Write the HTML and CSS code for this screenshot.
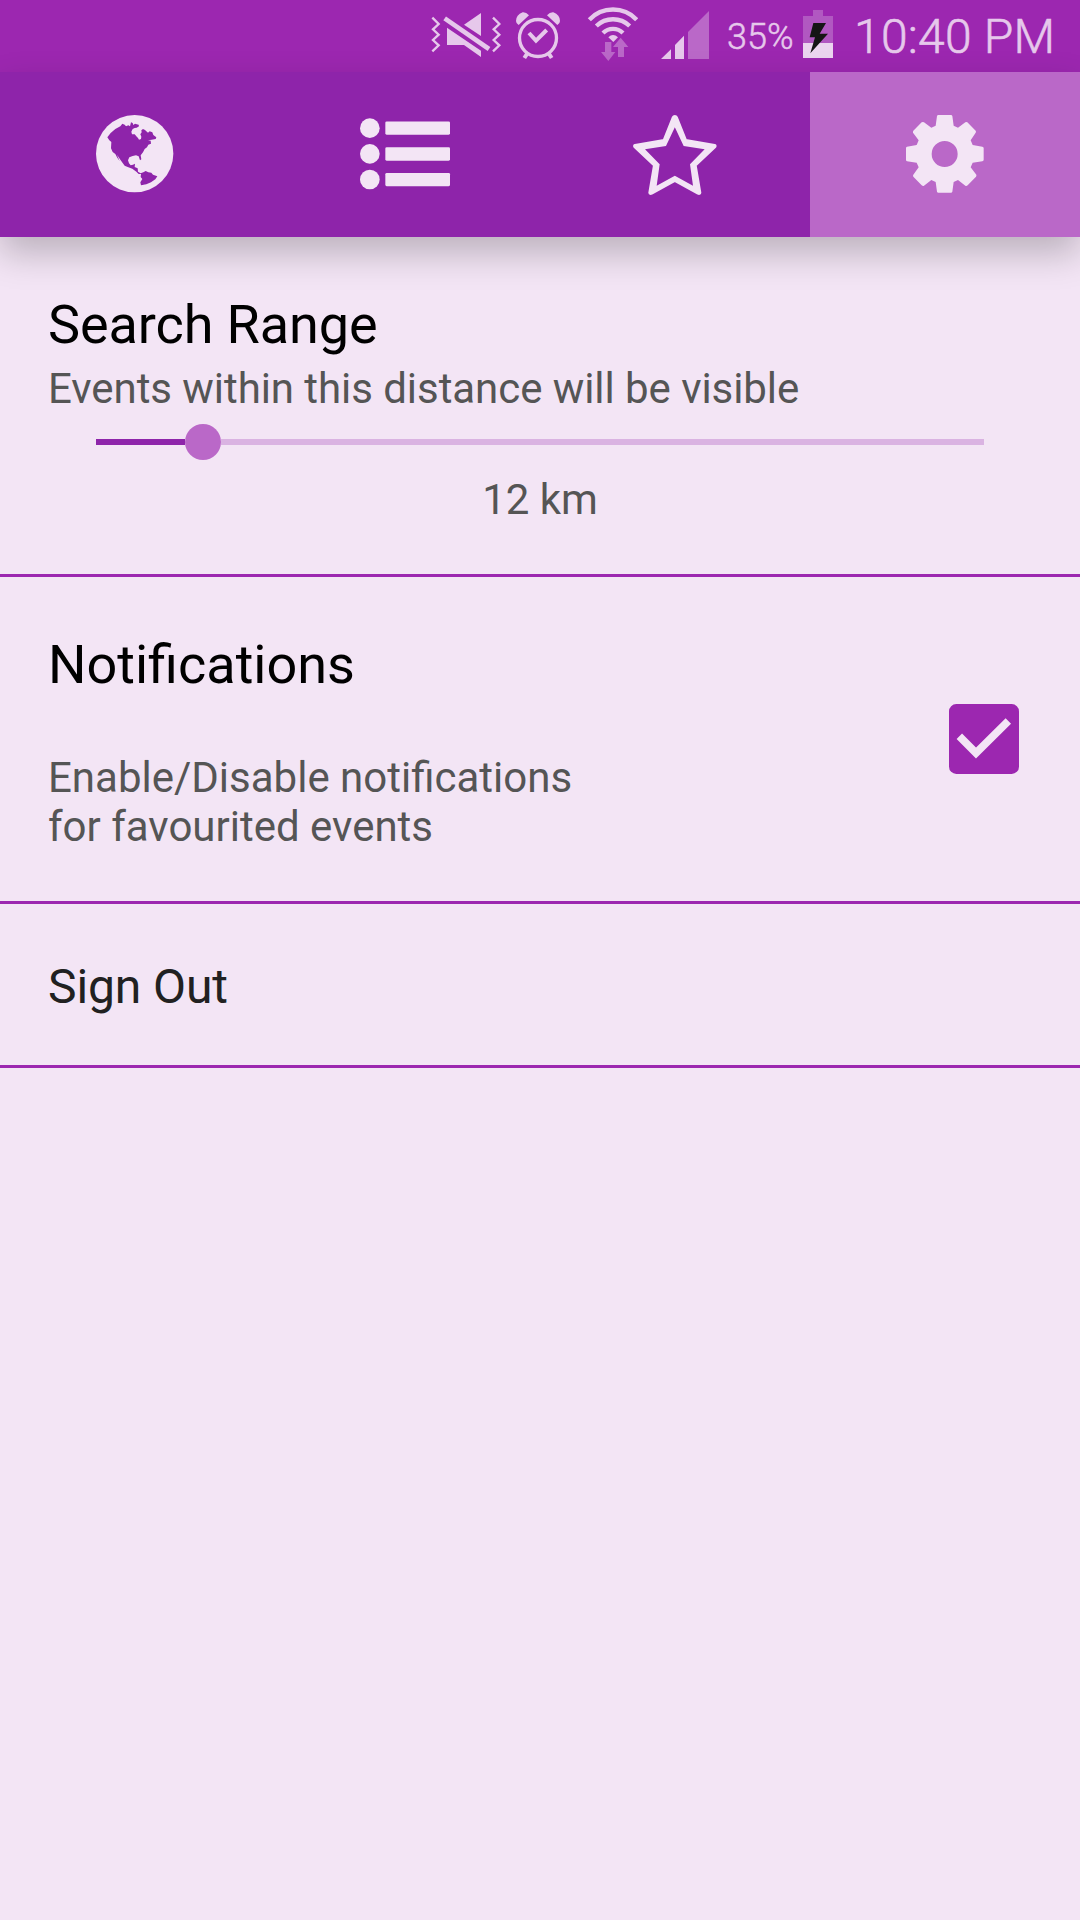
FILE: index.html
```html
<!DOCTYPE html>
<html lang="en">
<head>
<meta charset="utf-8">
<title>Settings</title>
<link rel="stylesheet" href="styles.css">
</head>
<body>
<header class="status">
  <svg class="s-mute" viewBox="30 0 216 216">
    <g fill="none" stroke="#e6c8eb" stroke-width="7"><path d="M37 53L56 72L39 88L56 104L39 120L56 136L37 154"/><path d="M219 53L238 72L221 88L238 104L221 120L238 136L219 154"/><path d="M74 55L207 147" stroke-width="14"/></g>
    <path fill="#e6c8eb" d="M183 39V108L132 74ZM81 83L183 152V171L132 135H81Z"/>
  </svg>
  <svg class="s-alarm" viewBox="282 0 144 216">
    <g fill="none" stroke="#e6c8eb"><circle cx="354" cy="114" r="55.500" stroke-width="10"/><path d="M327 99L348 122L380 90" stroke-width="12"/><path d="M322 160L313 174M386 160L395 174" stroke-width="12"/></g>
    <path fill="#e6c8eb" d="M296 75L327 46Q318 36 308 37Q288 45 288 63Q288 71 296 75ZM412 75L381 46Q390 36 400 37Q420 45 420 63Q420 71 412 75Z"/>
  </svg>
  <svg class="s-wifi" viewBox="501 0 153 216">
    <g fill="none" stroke="#e6c8eb" stroke-width="13"><path d="M508 59A98 98 0 0 1 650 59"/><path d="M529 78A72 72 0 0 1 629 78"/><path d="M549 99A43 43 0 0 1 609 99"/></g>
    <path fill="#e6c8eb" d="M565 112Q579 98 594 112L580 126Z"/>
    <path fill="#ba68c8" d="M555 126H574V156H586L565 183L543 156H555ZM602 113L625 141H612V171H594V141H579Z"/>
  </svg>
  <svg class="s-signal" viewBox="720 0 150 216">
    <path fill="#e6c8eb" d="M723 177L753 148V177ZM765 177V135L792 107V177Z"/><path fill="#ba68c8" d="M804 177V96L867 33V177Z"/>
  </svg>
  <span class="percent">35%</span>
  <svg class="s-battery" viewBox="309 0 90 216">
    <path fill="#b158c1" d="M339 30H369V48H399V129H309V48H339Z"/><path fill="#ebd4ef" d="M309 129H399V174H309Z"/><path fill="#151515" d="M340 69H378L359 101H384L331 160L345 112H329Z"/>
  </svg>
  <span class="clock">10:40 PM</span>
</header>
<nav class="tabs">
  <a class="tab"><svg class="icon" viewBox="0 0 330 330">
    <circle cx="164" cy="161" r="116" fill="#f3e5f5"/>
    <path fill="#8e24aa" d="M82 112L92 99L106 87L121 79L127 71L134 74L138 79L145 76L150 79L153 67L158 69L160 75L165 71L176 74L177 79L170 83L164 84L158 87L154 95L156 103L164 103L169 109L174 114L177 119L183 117L184 110L181 103L185 97L184 91L189 87L195 90L199 94L204 98L209 94L217 97L220 105L229 112L227 117L215 119L204 121L212 122L213 131L205 134L201 142L194 147L189 157L182 166L184 178L180 181L176 169L168 166L158 168L148 172L144 181L147 190L152 196L159 194L165 191L164 201L173 205L174 215L182 220L190 217L197 213L205 217L214 218L219 224L232 229L226 238L213 247L199 253L183 256L181 247L187 237L182 231L183 222L176 222L169 215L157 206L143 201L134 197L128 189L121 179L111 164L119 184L111 172L106 162L98 156L93 145L94 126L88 121Z"/>
  </svg></a>
  <a class="tab"><svg class="icon icon-list" viewBox="0 0 390 330"><g fill="#f3e5f5"><circle cx="89.500" cy="84.500" r="29.500"/><circle cx="89.500" cy="161.500" r="29.500"/><circle cx="89.500" cy="238.500" r="29.500"/><rect x="136" y="64.500" width="194" height="39.500" rx="4"/><rect x="136" y="142" width="194" height="40" rx="4"/><rect x="136" y="219" width="194" height="39.500" rx="4"/></g></svg></a>
  <a class="tab"><svg class="icon" viewBox="0 0 330 330"><path fill="#f3e5f5" stroke="#f3e5f5" stroke-width="8" stroke-linejoin="round" d="M164.500 49Q168 49 170 53L197 121L284 136Q287 137 285 140L226 196L240 278Q239 282 234 280L164.500 242L95 280Q90 282 89 278L103 196L44 140Q42 137 45 136L132 121L159 53Q161 49 164.500 49Z"/><path fill="#8e24aa" d="M164.500 82L191 138L254 148L210 193L219 257L164.500 227L110 257L119 193L75 148L138 138Z"/></svg></a>
  <a class="tab active"><svg class="icon" viewBox="300 120 330 330">
    <path fill="#f3e5f5" fill-rule="evenodd" d="M445 165H483Q486 165 487 168L491 197L504 203L526 187Q529 185 532 187L557 212Q559 215 557 218L542 241L548 255L577 260Q581 261 581 264V299Q581 303 577 304L548 308L542 322L559 344Q560 347 558 350L533 376Q529 379 526 377L504 360L491 366L487 395Q486 398 483 398H445Q442 398 441 395L437 366L424 360L402 377Q399 379 395 376L370 350Q368 347 370 344L386 322L380 308L351 304Q348 303 348 300V264Q348 261 351 260L380 255L386 241L369 218Q368 215 370 212L395 187Q399 185 402 187L424 203L437 197L441 168Q442 165 445 165ZM464 243A39 39 0 1 0 464 321A39 39 0 1 0 464 243Z"/>
  </svg></a>
</nav>
<main>
  <section class="row range">
    <h1 class="title">Search Range</h1>
    <p class="text hint">Events within this distance will be visible</p>
    <div class="slider"><span class="filled"></span><span class="thumb"></span><span class="rest"></span></div>
    <p class="text value">12 km</p>
  </section>
  <section class="row notify">
    <div>
      <h1 class="title">Notifications</h1>
      <p class="text desc">Enable/Disable notifications<br>for favourited events</p>
    </div>
    <svg class="check" viewBox="87 71 210 210"><rect x="87" y="71" width="210" height="210" rx="22" fill="#9c27b0"/><path d="M118 168L168 218L265 122" fill="none" stroke="#f3e5f5" stroke-width="23"/></svg>
  </section>
  <section class="row signout">Sign Out</section>
</main>
</body>
</html>
```
FILE: styles.css
```css
* { box-sizing: border-box; }
body { margin: 0; height: 1920px; overflow: hidden; background: #f3e5f5; font-family: Roboto, sans-serif; color: #000; }
svg { display: block; flex: none; }
.status { height: 72px; padding-left: 430px; display: flex; background: #9c27b0; color: #e6c8eb; white-space: nowrap; }
.status svg { height: 72px; }
.s-mute { width: 72px; }
.s-alarm { width: 48px; margin-left: 12px; }
.s-wifi { width: 51px; margin-left: 25px; }
.s-signal { width: 50px; margin-left: 22px; }
.percent { width: 76px; margin-left: 17px; padding-top: 16px; font-size: 36px; line-height: 42px; font-weight: 300; -webkit-text-stroke: .5px #e6c8eb; }
.s-battery { width: 30px; }
.clock { margin-left: 21px; padding-top: 9px; font-size: 48px; line-height: 56px; font-weight: 300; letter-spacing: .25px; -webkit-text-stroke: .6px #e6c8eb; }
.tabs { position: relative; height: 165px; display: grid; grid-template-columns: repeat(4, 1fr); background: #8e24aa; box-shadow: 0 16px 34px rgba(0, 0, 0, .23); }
.tab { display: flex; justify-content: center; padding-top: 28px; }
.active { background: #ba68c8; }
.icon { width: 110px; height: 110px; }
.icon-list { width: 130px; }
.row { padding: 56px 48px 0; border-bottom: 3px solid #9c27b0; }
.title { margin: 0; font-size: 54px; line-height: 63px; font-weight: 400; }
.text { margin: 0; font-size: 42px; line-height: 49px; color: #555; }
.range { height: 340px; }
.range .title { margin-bottom: 8px; letter-spacing: -.1px; }
.hint { letter-spacing: -.06px; }
.slider { display: flex; align-items: center; height: 36px; margin: 11px 48px 15px; }
.filled { width: 89px; height: 6px; background: #8e24aa; }
.thumb { width: 36px; height: 36px; border-radius: 50%; background: #ba68c8; }
.rest { flex: 1; height: 6px; background: #dab3e2; }
.value { text-align: center; }
.notify { height: 327px; display: flex; justify-content: space-between; padding-right: 61px; }
.desc { margin-top: 57px; }
.check { width: 70px; height: 70px; margin-top: 71px; }
.signout { height: 164px; padding-top: 55px; font-size: 48px; line-height: 56px; color: #212121; letter-spacing: -.1px; }
```
